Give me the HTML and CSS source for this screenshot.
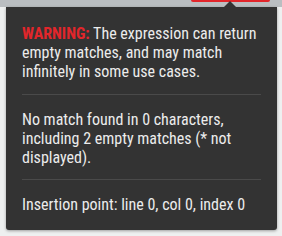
FILE: index.html
```html
<!DOCTYPE html>
<html><head><meta charset="utf-8"><link rel="stylesheet" href="styles.css"></head>
<body>
<div class="topbar"><div class="btn-edge"></div></div>
<div class="tip">
  <div class="arrow"></div>
  <div class="section first"><span class="warn">WARNING:</span> The expression can return empty matches, and may match infinitely in some use cases.</div>
  <div class="section">No match found in 0 characters, including 2 empty matches (* not displayed).</div>
  <div class="section last">Insertion point: line 0, col 0, index 0</div>
</div>
</body></html>
```
FILE: styles.css
```css
html,body{margin:0;padding:0}
body{background:#eef0f0;width:282px;height:236px;overflow:hidden;font-family:"Roboto Condensed",Roboto,sans-serif;}
.topbar{height:7px;background:#babec1;display:flex;justify-content:flex-end;padding-right:12px}
.btn-edge{width:79px;height:2px;background:#e2262b;border-radius:0 0 2px 2px}
.tip{position:relative;margin:0 5px 0 6px;background:#333333;border-radius:0 0 3px 3px;box-shadow:0 1px 3px rgba(0,0,0,.35);padding:5px 16px 4px;color:#ececec;font-size:16px;line-height:19.2px;height:223px;box-sizing:border-box}
.arrow{position:absolute;top:-6px;left:218px;width:0;height:0;border-left:6px solid transparent;border-right:6px solid transparent;border-bottom:6px solid #333333}
.section{padding:12px 0 12px;border-bottom:1px solid #4a4a4a}
.section+.section{padding-top:15px}
.last{border-bottom:none}
.warn{color:#e2262b;font-weight:700}
```
